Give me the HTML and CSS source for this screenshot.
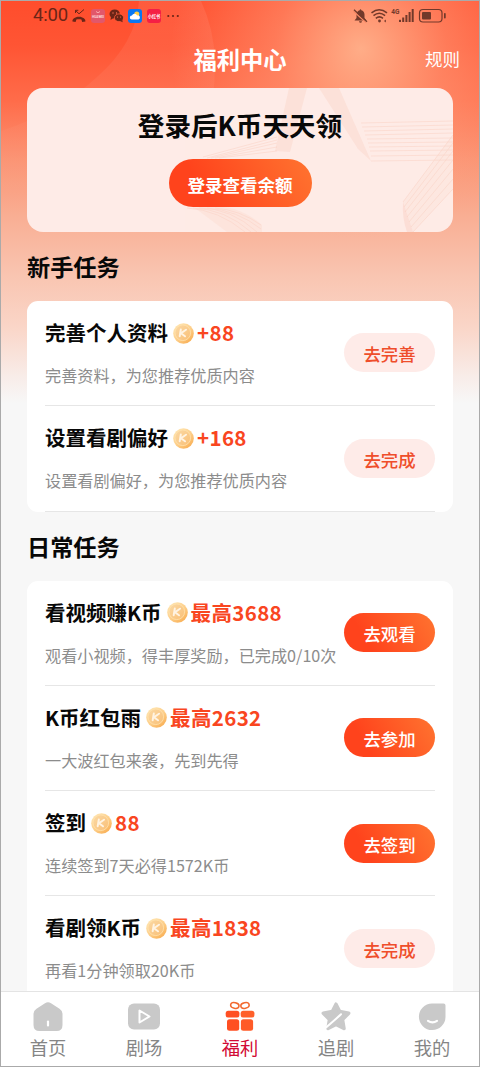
FILE: index.html
```html
<!DOCTYPE html>
<html lang="zh-CN">
<head>
<meta charset="utf-8">
<title>福利中心</title>
<link rel="stylesheet" href="styles.css">
</head>
<body>
<svg width="0" height="0" class="defs" aria-hidden="true">
  <defs>
    <linearGradient id="coinFill" x1="0.1" y1="0" x2="0.9" y2="1">
      <stop offset="0" stop-color="#ffe8b6"/><stop offset="0.55" stop-color="#fdcd87"/><stop offset="1" stop-color="#f8a94a"/>
    </linearGradient>
    <linearGradient id="coinFace" x1="0" y1="0" x2="1" y2="1">
      <stop offset="0" stop-color="#fbd9a4"/><stop offset="1" stop-color="#f9bf76"/>
    </linearGradient>
    <symbol id="coin" viewBox="0 0 21 21">
      <circle cx="10.5" cy="10.5" r="10.3" fill="url(#coinFill)"/>
      <circle cx="9.8" cy="9.8" r="7.8" fill="url(#coinFace)" stroke="#ffe2ad" stroke-width="0.8"/>
      <path d="M7.800 6.600 6.700 13.200M13 6.700 8 10.300l4 3" fill="none" stroke="#fff3e2" stroke-width="2" stroke-linecap="round" stroke-linejoin="round"/>
    </symbol>
  </defs>
</svg>
<div class="phone">
  <main class="page">
    <svg class="glow" viewBox="0 0 478 400" aria-hidden="true">
      <defs><linearGradient id="fade" x1="0" y1="0" x2="0" y2="1"><stop offset="0" stop-color="#fff" stop-opacity=".08"/><stop offset="1" stop-color="#fff" stop-opacity="0"/></linearGradient></defs>
      <path d="M138 0Q135 42 96 76Q60 110 0 130V200H180Q214 140 214 60Q213 28 200 0Z" fill="url(#fade)"/>
    </svg>
    <header class="status">
      <span class="clock">4:00</span>
      <svg class="status-left" width="108" height="16" viewBox="0 0 108 16">
        <g fill="none" stroke="#6b2517" stroke-width="1"><path d="M3.500 2.500 7 5.800 12 1.500M3.500 5V2.300h2.800"/></g>
        <path d="M.5 13.600c-.5-2.400 2.400-4.800 6.400-4.800s7 2.400 6.500 4.800l-3.200.3-.8-2.400c-1.500-.5-3.500-.5-5 0l-.8 2.400Z" fill="#6b2517"/>
        <rect x="19" y="1" width="14" height="14" rx="3" fill="#e2576a"/>
        <path d="M24 3.500l2 1.300 2-1.300" fill="none" stroke="#ffc0bd" stroke-width=".8"/>
        <text x="26" y="10" class="app-one">HUAWEI</text>
        <ellipse cx="42.700" cy="6" rx="5.200" ry="4.600" fill="#6b2517"/><path d="m39 9-.5 3 3-2Z" fill="#6b2517"/>
        <ellipse cx="47" cy="9.800" rx="4.600" ry="3.900" fill="#6b2517" stroke="#ff5d3b" stroke-width=".8"/><path d="m48 13 2.700 1.200-.5-2.500Z" fill="#6b2517"/>
        <g fill="#ff7352"><circle cx="41" cy="5" r=".65"/><circle cx="44.500" cy="5" r=".65"/><circle cx="45.500" cy="9" r=".6"/><circle cx="48.600" cy="9" r=".6"/></g>
        <rect x="56" y="1" width="14" height="14" rx="3" fill="#0878f2"/>
        <circle cx="64.800" cy="6" r="2.500" fill="#ffce45"/><path d="M59.800 11.500a2 2 0 0 1 .1-4 2.900 2.900 0 0 1 5.300 0 2 2 0 0 1 1.300 4Z" fill="#fff"/>
        <rect x="75" y="1" width="14" height="14" rx="3" fill="#f51f45"/><text x="82" y="9.700" class="app-two">小红书</text>
        <g fill="#6b2517"><circle cx="96.300" cy="8" r="1.100"/><circle cx="101" cy="8" r="1.100"/><circle cx="105.800" cy="8" r="1.100"/></g>
      </svg>
      <svg class="status-right" width="94" height="16" viewBox="0 0 94 16">
        <g fill="#72392a">
          <path d="M1.500 12.500 3.500 10V6.500C3.500 4 5 2.700 6.700 2.200 6.700.8 8.300.8 8.300 2.200c1.900.5 3.200 2 3.200 4.300V10l2 2.500ZM6 13.200h3q-.2 1.500-1.500 1.500T6 13.200Z"/>
          <circle cx="26.500" cy="13" r="1.400"/>
          <path d="m31 13 1.800-1.500v3Z"/>
          <rect x="46" y="11.800" width="2" height="2.200"/><rect x="49.200" y="9.500" width="2" height="4.500"/><rect x="52.400" y="7" width="2" height="7"/><rect x="55.600" y="4" width="2" height="10"/><rect x="58.700" y="1" width="2" height="13"/>
          <rect x="69" y="4" width="9" height="7.500" rx="1"/><rect x="91" y="5" width="1.700" height="5.500" rx=".8"/>
        </g>
        <path d="M.5 3.200 13 14.400" stroke="#f98a66" stroke-width="1.300"/>
        <path d="M1 1.800 14 13.700" stroke="#72392a" stroke-width="1.300"/>
        <g fill="none" stroke="#72392a" stroke-width="1.600"><path d="M18.500 4.800q7.700-6 15.500 0M20.500 7.600q5.800-4.600 11.600 0M22.800 10.400q3.700-2.900 7.200 0"/><rect x="66.500" y="1.500" width="22.500" height="12.500" rx="3.500" stroke-width="1.200"/></g>
        <text x="42.300" y="6.300" class="net">4G</text>
      </svg>
    </header>
    <nav class="titlebar"><span></span><h1>福利中心</h1><a class="rules">规则</a></nav>
    <section class="login">
      <svg class="ribbon" viewBox="0 0 426 144" aria-hidden="true">
        <path d="M262 0h18l-17 64-15-1Z" fill="#fbd5c8" opacity=".45"/>
        <path d="M292 0h20l32 73-13-12Z" fill="#fbd5c8" opacity=".45"/>
        <g fill="none" stroke="#f8b299" stroke-width=".6" opacity=".4">
          <path d="m180 70 70-18M184 70l66-15M188 70l62-11M192 70l58-7M176 69l74-20"/>
          <path d="m334 35 92-2M335 39l91-2M337 43l89-2M338 47l88-2M340 51l86-1M341 55l85-1M342 59l84-1M343 63l83-1M344 68l82-1M344 73l82-1"/>
          <path d="m376 114 50-67M377 119l49-64M378 124l48-61M380 129l46-57M382 134l44-53M384 139l42-48M386 144l40-43"/>
          <path d="M160 120q32 2 58 24M166 120q32 1 58 24M172 120q32 0 58 24M180 120q30 2 54 21M188 120q25 2 46 17"/>
        </g>
        <path d="M168 120q38-8 67 17v7h-35Z" fill="#fbd5c8" opacity=".3"/>
        <path d="m376 114 10 30h-6q-5-14-4-30Z" fill="#f9c6b6" opacity=".35"/>
        <path d="m376 114 50-67v54l-40 43Z" fill="#fbd5c8" opacity=".2"/>
      </svg>
      <h2>登录后K币天天领</h2>
      <button class="login-btn">登录查看余额</button>
    </section>

    <h3 class="section-title">新手任务</h3>
    <section class="tasks">
      <article class="task">
        <div class="info"><div class="name"><b>完善个人资料</b><svg class="coin"><use href="#coin"/></svg><em>+88</em></div><p>完善资料，为您推荐优质内容</p></div>
        <button class="pill soft">去完善</button>
      </article>
      <article class="task">
        <div class="info"><div class="name"><b>设置看剧偏好</b><svg class="coin"><use href="#coin"/></svg><em>+168</em></div><p>设置看剧偏好，为您推荐优质内容</p></div>
        <button class="pill soft">去完成</button>
      </article>
    </section>

    <h3 class="section-title">日常任务</h3>
    <section class="tasks">
      <article class="task">
        <div class="info"><div class="name"><b>看视频赚K币</b><svg class="coin"><use href="#coin"/></svg><em>最高3688</em></div><p>观看小视频，得丰厚奖励，已完成0/10次</p></div>
        <button class="pill">去观看</button>
      </article>
      <article class="task">
        <div class="info"><div class="name"><b>K币红包雨</b><svg class="coin"><use href="#coin"/></svg><em>最高2632</em></div><p>一大波红包来袭，先到先得</p></div>
        <button class="pill">去参加</button>
      </article>
      <article class="task">
        <div class="info"><div class="name"><b>签到</b><svg class="coin"><use href="#coin"/></svg><em>88</em></div><p>连续签到7天必得1572K币</p></div>
        <button class="pill">去签到</button>
      </article>
      <article class="task">
        <div class="info"><div class="name"><b>看剧领K币</b><svg class="coin"><use href="#coin"/></svg><em>最高1838</em></div><p>再看1分钟领取20K币</p></div>
        <button class="pill soft">去完成</button>
      </article>
    </section>
  </main>

  <nav class="tabs">
    <a class="tab"><svg viewBox="0 0 32 32"><path d="M13 2.300q3-2 6 0l8.500 5.500q3 2 3 5V24q0 6-6 6h-17q-6 0-6-6V12.800q0-3 3-5Z" fill="#c9c9c9"/><path d="M16 20.500v4" stroke="#fff" stroke-width="2.200" stroke-linecap="round"/></svg><span>首页</span></a>
    <a class="tab"><svg viewBox="0 0 32 32"><rect y="2.500" width="32" height="26" rx="6" fill="#c9c9c9"/><path d="M11.500 9.500v12l10-6Z" fill="none" stroke="#fff" stroke-width="2" stroke-linejoin="round"/></svg><span>剧场</span></a>
    <a class="tab active"><svg viewBox="0 0 32 32"><g fill="none" stroke="#f2692f" stroke-width="1.500"><ellipse cx="10.800" cy="4.500" rx="4.200" ry="2.800" transform="rotate(12 10.800 4.500)"/><ellipse cx="21" cy="4.500" rx="4.200" ry="2.800" transform="rotate(-12 21 4.500)"/></g><g fill="#ff4f22"><rect x="1.700" y="9.800" width="13.700" height="6.800" rx="2.500"/><rect x="16.700" y="9.800" width="13.700" height="6.800" rx="2.500" fill="#ff602a"/><rect x="3" y="18.200" width="12.200" height="11.600" rx="2.500"/><rect x="16.900" y="18.200" width="12.200" height="11.600" rx="2.500" fill="#ff5b28"/></g></svg><span>福利</span></a>
    <a class="tab"><svg viewBox="0 0 32 32"><path d="m16 3.200 3.700 7.300 9 1.700-6.200 6.300 1.500 9-8-4-8 4 1.500-9-6.200-6.300 9-1.700Z" fill="#c9c9c9" stroke="#c9c9c9" stroke-width="3.500" stroke-linejoin="round"/><path d="M6 26.500Q16 18 21 13.300" fill="none" stroke="#fff" stroke-width="2" stroke-linecap="round"/></svg><span>追剧</span></a>
    <a class="tab"><svg viewBox="0 0 32 32"><path d="M16 2.500h11.500q2 0 2 2V16A13.300 13.300 0 1 1 16 2.500Z" fill="#c9c9c9"/><path d="M12 19.800q4.500 3 9 0" fill="none" stroke="#fff" stroke-width="2.200" stroke-linecap="round"/></svg><span>我的</span></a>
  </nav>
</div>
</body>
</html>
```
FILE: styles.css
```css
* { box-sizing: border-box; margin: 0; padding: 0; }

body {
  font-family: "Noto Sans CJK SC", sans-serif;
  color: #080808;
  background: #fff;
}

.defs { position: absolute; }

.phone {
  width: 480px;
  height: 1067px;
  border: 1px solid #aaa;
  display: flex;
  flex-direction: column;
  overflow: hidden;
}

.page {
  position: relative;
  flex: 1;
  min-height: 0;
  overflow: hidden;
  padding: 0 26px;
  background:
    radial-gradient(circle 190px at 360px 48px, rgba(255, 188, 150, .85), rgba(255, 170, 135, .45) 45%, rgba(255, 150, 115, 0)),
    linear-gradient(180deg, #ff4d2c 0, #ff5534 45px, #ff6c4a 100px, #fb9474 160px, #f9ae93 215px, #f9c5b1 275px, #fad5c7 325px, #f8ece8 375px, #f7f7f7 402px);
}

.glow { position: absolute; left: 0; top: 0; width: 478px; height: 400px; }

.status {
  position: relative;
  display: flex;
  align-items: center;
  height: 29px;
  padding: 0 7px 0 6px;
}
.clock { width: 39px; font: 18.5px/29px Roboto, sans-serif; color: #6b2517; letter-spacing: -.2px; }
.status-left { display: block; }
.status-right { display: block; margin-left: auto; margin-right: -1px; }
.app-one { font: bold 3.2px Roboto, sans-serif; fill: #ffd9d6; text-anchor: middle; }
.app-two { font: bold 4.2px "Noto Sans CJK SC", sans-serif; fill: #fff; text-anchor: middle; }
.net { font: bold 6.5px Roboto, sans-serif; fill: #72392a; text-anchor: middle; }

.titlebar {
  position: relative;
  display: grid;
  grid-template-columns: 1fr auto 1fr;
  align-items: center;
  height: 58px;
  margin-right: -7px;
  margin-left: -7px;
  color: #fff;
}
.titlebar h1 { font-size: 23.3px; line-height: 30px; }
.rules { justify-self: end; font-size: 17.5px; font-weight: 400; line-height: 24px; }

.login {
  position: relative;
  height: 144px;
  padding-top: 18px;
  border-radius: 16px;
  background: #feebe7;
  overflow: hidden;
  display: flex;
  flex-direction: column;
  align-items: center;
}
.ribbon { position: absolute; left: 0; top: 0; width: 426px; height: 144px; }
.login h2 { position: relative; font-size: 26.6px; line-height: 38px; }
button { border: 0; font-family: inherit; color: #fff; background: linear-gradient(60deg, #ff431c 25%, #ff7430); }
.login-btn {
  position: relative;
  width: 143px;
  height: 48px;
  margin-top: 15px;
  padding-top: 4px;
  border-radius: 24px;
  font-size: 17.5px;
  font-weight: 700;
  line-height: 44px;
}

.section-title {
  position: relative;
  height: 69px;
  font-size: 23.2px;
  line-height: 69px;
}

.tasks {
  position: relative;
  padding: 0 18px;
  border-radius: 11px;
  background: #fff;
}
.task {
  height: 105.3px;
  display: flex;
  justify-content: space-between;
  align-items: flex-start;
  border-bottom: 1px solid #e6e6e6;
}
.info { padding-top: 16px; white-space: nowrap; }
.name { display: flex; align-items: center; height: 32px; font-size: 20.5px; }
.name b, .name em { line-height: 30px; margin-bottom: 2px; }
.coin { width: 21px; height: 21px; margin: 0 3px 0 5px; }
.name em { font-style: normal; font-weight: 700; color: #f9461f; letter-spacing: .35px; }
.info p { margin-top: 14px; font-size: 16.15px; line-height: 24px; font-weight: 400; color: #8c8c8c; }

.pill {
  flex: none;
  width: 91px;
  height: 39px;
  margin-top: 32.4px;
  padding-top: 3px;
  border-radius: 20px;
  font-size: 17.4px;
  font-weight: 500;
  line-height: 36px;
}
.soft { background: #feebe8; color: #ef4e2b; }

.tabs {
  flex: none;
  height: 75px;
  margin: 0 -1px;
  border-top: 1px solid #e4e4e4;
  background: #fff;
  display: grid;
  grid-template-columns: repeat(5, 1fr);
}
.tab { display: flex; flex-direction: column; align-items: center; padding-top: 9px; font-size: 18.3px; color: #858585; }
.tab svg { width: 32px; height: 32px; }
.tab span { line-height: 28px; }
.active { color: #d20a35; }
```
